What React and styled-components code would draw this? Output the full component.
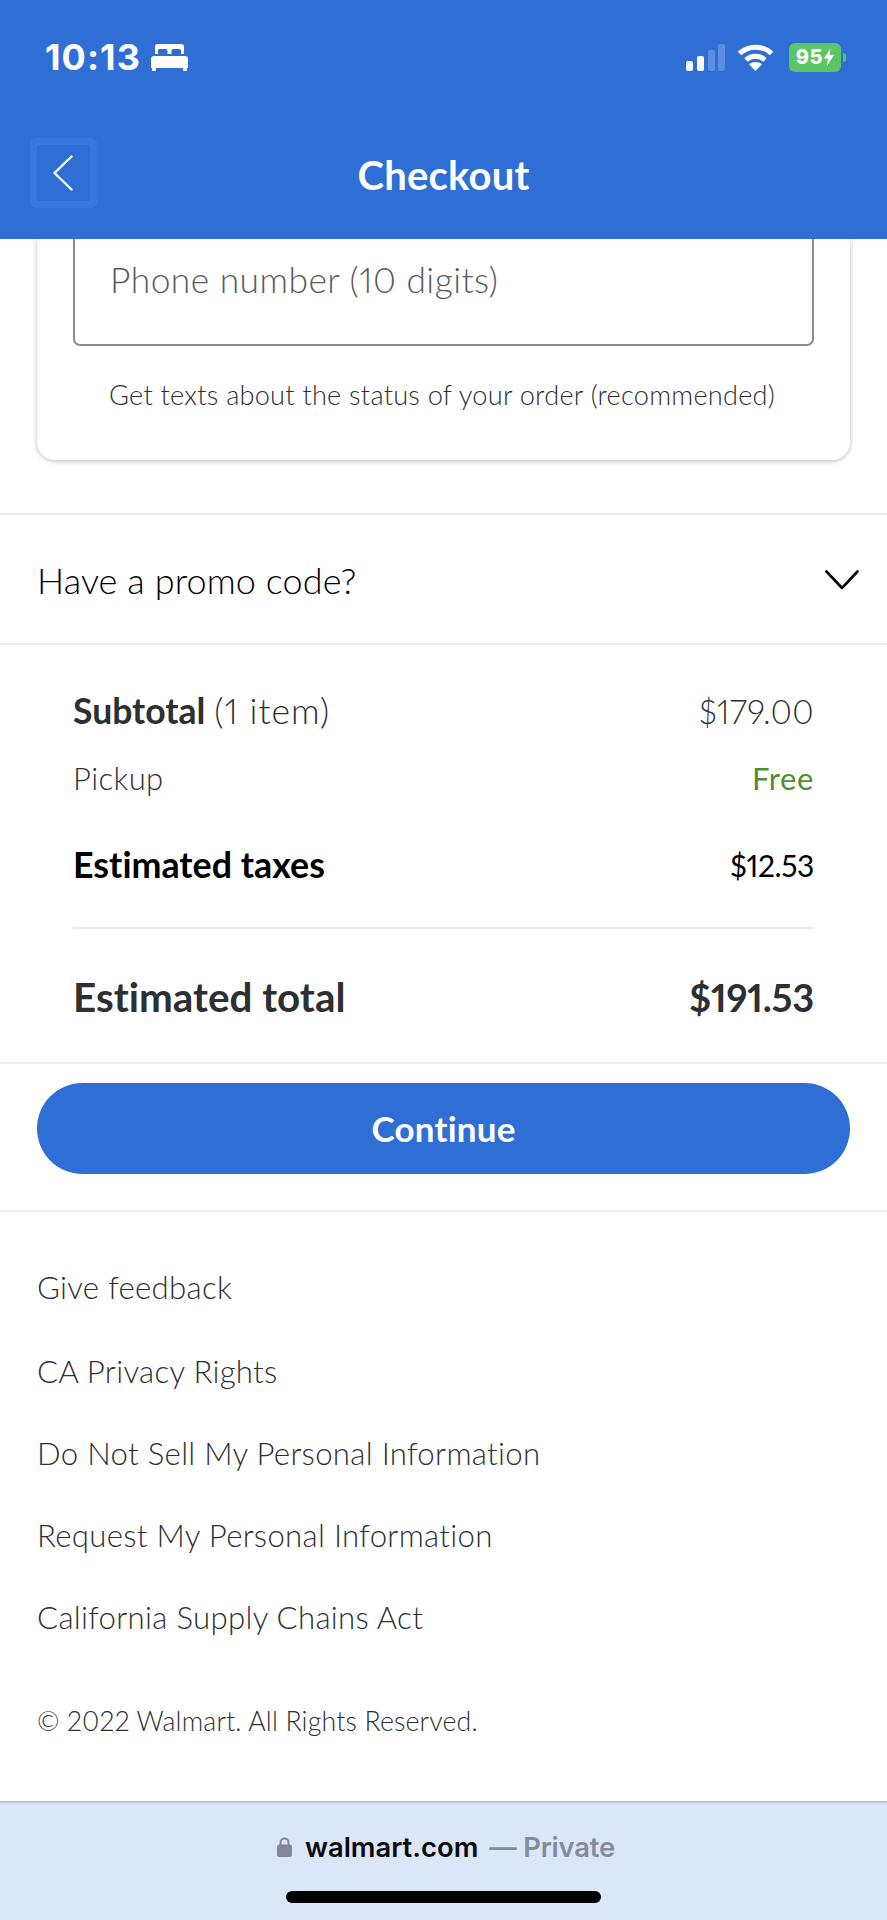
import React from "react";
import styled, { createGlobalStyle } from "styled-components";

const Global = createGlobalStyle`
  html, body { margin: 0; padding: 0; background: #fff; }
  * { box-sizing: border-box; }
`;
const BLUE = "#2f6ed4";
const LATO = `Lato, "Noto Sans", sans-serif`;
const SYS = `Inter, "Liberation Sans", sans-serif`;

const Page = styled.div`
  width: 887px; height: 1920px; overflow: hidden; background: #fff;
  display: flex; flex-direction: column; font-family: ${LATO};
  font-variant-ligatures: none; font-variant-numeric: proportional-nums;
`;
const Header = styled.header`
  flex: none; height: 239px; background: ${BLUE}; display: flex; flex-direction: column;
  padding-top: 42px; color: #fff;
`;
const StatusBar = styled.div`
  height: 30px; padding: 0 46px 0 45px; display: flex; align-items: center; justify-content: space-between;
`;
const StatusGroup = styled.div`
  display: flex; align-items: center; gap: ${p => p.$gap}px;
`;
const Time = styled.span`
  font: 700 36px/30px ${SYS}; letter-spacing: 1.1px;
`;
const Battery = styled.div`
  width: 52px; height: 29px; margin-left: 3px; border-radius: 6px; background: #5cc565; color: #fff;
  display: flex; align-items: center; justify-content: center; gap: 1px; position: relative;
  font: 800 20px/1 ${SYS}; letter-spacing: 0.6px;
  &::after {
    content: ""; position: absolute; left: 54px; top: 10px; width: 3px; height: 9px;
    border-radius: 0 3px 3px 0; background: #5cc565;
  }
`;
const Nav = styled.nav`
  margin-top: 66px; height: 70px; padding: 0 30px;
  display: grid; grid-template-columns: 1fr auto 1fr; align-items: center;
`;
const BackButton = styled.button`
  width: 67px; height: 70px; padding: 0 2px 0 0; background: transparent; border: 7px solid #3877de; border-radius: 6px;
  display: flex; align-items: center; justify-content: center;
`;
const Title = styled.h1`
  margin: 4px 0 0; font: 700 40px/1 ${LATO}; color: #fff; letter-spacing: 0.2px;
`;
const CardZone = styled.section`
  flex: none; height: 276px; padding: 0 37px; border-bottom: 2px solid #ececee;
`;
const Card = styled.div`
  height: 221px; background: #fff; border-radius: 0 0 18px 18px; padding: 0 36px;
  box-shadow: 0 1px 5px rgba(0,0,0,.28);
  clip-path: inset(0 -10px -10px -10px);
`;
const PhoneInput = styled.div`
  height: 107px; border: 2px solid #8b8b92; border-top: none; border-radius: 0 0 7px 7px;
  padding: 22px 0 0 35px; font: 300 35.4px/38px ${LATO}; color: #5a5b60;
  font-variant-numeric: proportional-nums; letter-spacing: .45px;
`;
const Hint = styled.p`
  margin: 32px 0 0; padding-left: 36px; font: 300 27.2px/34px ${LATO}; color: #2e2f33; white-space: nowrap;
  font-variant-ligatures: none; letter-spacing: .22px;
`;
const PromoRow = styled.div`
  flex: none; height: 130px; padding: 2px 28px 0 37px; border-bottom: 2px solid #ececee;
  display: flex; align-items: center; justify-content: space-between;
  font: 300 36px/1 ${LATO}; color: #000; letter-spacing: .1px;
`;
const Summary = styled.section`
  flex: none; padding: 46px 73px 0; height: 419px; display: flex; flex-direction: column; border-bottom: 2px solid #ececee;
`;
const SummaryRow = styled.div`
  display: flex; align-items: center; justify-content: space-between;
  height: 40px; margin-top: ${p => p.$mt || 0}px; color: ${p => p.$color || "#2e2f32"};
  font-size: ${p => p.$size}px; line-height: 1;
`;
const Strong = styled.strong`font-weight: 700;`;
const Count = styled.span`font-weight: 300; letter-spacing: 1px; color: #2e2f32;`;
const Price = styled.span`
  font-weight: ${p => p.$weight || 300}; font-size: ${p => p.$size}px; letter-spacing: ${p => p.$track}px;
  color: ${p => p.$color || "inherit"};
`;
const PickupLabel = styled.span`font-weight: 300; letter-spacing: .4px;`;
const Free = styled.span`color: #4f8f32; font-weight: 400; letter-spacing: .6px;`;
const Rule = styled.hr`
  margin: 42px 0 0; border: 0; height: 2px; flex: none; background: #ececee;
`;
const ButtonZone = styled.div`
  flex: none; height: 148px; padding: 19px 37px 0; border-bottom: 2px solid #ececee;
`;
const Continue = styled.button`
  width: 100%; height: 91px; border: 0; border-radius: 46px; background: ${BLUE}; color: #fff;
  font: 700 35px/1 ${LATO}; letter-spacing: .2px;
`;
const Footer = styled.footer`
  flex: 1; padding: 0 37px;
`;
const FooterLinks = styled.ul`
  list-style: none; margin: 55px 0 0; padding: 0; display: flex; flex-direction: column; gap: 42px;
`;
const FooterLink = styled.li`
  font: 300 31.2px/40px ${LATO}; color: #2e2f33; white-space: nowrap;
  font-variant-ligatures: none; letter-spacing: .3px;
  &:first-child { margin-bottom: 2px; }
`;
const Copyright = styled.p`
  margin: 67px 0 0; font: 300 26.7px/34px ${LATO}; color: #2e2f33;
  font-variant-numeric: proportional-nums; font-variant-ligatures: none; letter-spacing: .17px;
`;
const BrowserBar = styled.div`
  flex: none; height: 119px; background: #dbe7f8; border-top: 2px solid #bcc4cf;
  display: flex; flex-direction: column; align-items: center;
`;
const Url = styled.div`
  margin: 26px 0 0 5px; display: flex; align-items: center; height: 36px; font: 600 27.4px/36px ${SYS};
`;
const Domain = styled.span`color: #0a0a0a; margin: 0 11px 0 13px;`;
const Private = styled.span`color: #868b9a; letter-spacing: -.2px;`;
const HomeBar = styled.div`
  margin-top: 26px; width: 315px; height: 12px; border-radius: 6px; background: #000;
`;

const BedIcon = () => (
  <svg width="37" height="27" viewBox="0 0 37 27" fill="#fff">
    <path d="M4 2.500A2.500 2.500 0 0 1 6.500 0h24A2.500 2.500 0 0 1 33 2.500V10H30V6.500a1.500 1.500 0 0 0-1.500-1.500H22a1.500 1.500 0 0 0-1.500 1.500V10h-4V6.500A1.500 1.500 0 0 0 15 5H8.500A1.500 1.500 0 0 0 7 6.500V10H4Z"/>
    <path d="M3 12h31a3 3 0 0 1 3 3v9H0v-9a3 3 0 0 1 3-3Z"/>
    <rect x="1" y="24" width="4" height="3" rx="1"/><rect x="32" y="24" width="4" height="3" rx="1"/>
  </svg>
);
const SignalIcon = () => (
  <svg width="39" height="27" viewBox="0 0 39 27">
    <rect x="0" y="17" width="7" height="10" rx="2" fill="#fff"/>
    <rect x="11" y="12" width="7" height="15" rx="2" fill="#fff"/>
    <rect x="22" y="6" width="7" height="21" rx="2" fill="#5b8ee0"/>
    <rect x="32" y="0" width="7" height="27" rx="2" fill="#5b8ee0"/>
  </svg>
);
const WifiIcon = () => (
  <svg width="37" height="27" viewBox="0 0 37 27" fill="none" stroke="#fff" strokeWidth="5">
    <path d="M2.500 9.500C11.500 1 25.500 1 34.500 9.500"/>
    <path d="M9 16c5.500-5 13.500-5 19 0"/>
    <path d="M18.500 27l-6.500-6.700c3.600-3 9.400-3 13 0Z" fill="#fff" stroke="none"/>
  </svg>
);
const Bolt = () => (
  <svg width="10" height="18" viewBox="0 0 10 18" fill="#fff"><path d="M6.500 0 0 10.500h4L2.800 18 10 7H5.700Z"/></svg>
);
const BackIcon = () => (
  <svg width="20" height="36" viewBox="0 0 20 36" fill="none" stroke="#fff" strokeWidth="2.400" strokeLinecap="round" strokeLinejoin="round">
    <path d="M18.500 1.500 1.500 18l17 16.500"/>
  </svg>
);
const ChevronDown = () => (
  <svg width="34" height="20" viewBox="0 0 34 20" fill="none" stroke="#000" strokeWidth="2.600" strokeLinecap="round" strokeLinejoin="round">
    <path d="M1.500 1.500 17 18 32.500 1.500"/>
  </svg>
);
const LockIcon = () => (
  <svg width="15" height="20" viewBox="0 0 15 20" fill="#82869a">
    <path d="M3.500 8V5.500a4 4 0 0 1 8 0V8" fill="none" stroke="#82869a" strokeWidth="2"/>
    <rect x="0" y="7.500" width="15" height="12.500" rx="2.500"/>
  </svg>
);

const links = ["Give feedback", "CA Privacy Rights", "Do Not Sell My Personal Information", "Request My Personal Information", "California Supply Chains Act"];

export default function App() {
  return (
    <Page>
      <Global />
      <Header>
        <StatusBar>
          <StatusGroup $gap={10}><Time>10:13</Time><BedIcon /></StatusGroup>
          <StatusGroup $gap={12}><SignalIcon /><WifiIcon /><Battery>95<Bolt /></Battery></StatusGroup>
        </StatusBar>
        <Nav>
          <BackButton aria-label="Back"><BackIcon /></BackButton>
          <Title>Checkout</Title>
        </Nav>
      </Header>
      <CardZone>
        <Card>
          <PhoneInput>Phone number (10 digits)</PhoneInput>
          <Hint>Get texts about the status of your order (recommended)</Hint>
        </Card>
      </CardZone>
      <PromoRow>Have a promo code?<ChevronDown /></PromoRow>
      <Summary>
        <SummaryRow $size={35.5}><span><Strong>Subtotal</Strong> <Count>(1 item)</Count></span><Price $size={33} $track={0.300} $color="#2e2f33">$179.00</Price></SummaryRow>
        <SummaryRow $mt={27} $size={31} $color="#2e2f33"><PickupLabel>Pickup</PickupLabel><Free>Free</Free></SummaryRow>
        <SummaryRow $mt={47} $size={35.8} $color="#000"><Strong>Estimated taxes</Strong><Price $size={30} $weight={400} $track={-0.400}>$12.53</Price></SummaryRow>
        <Rule />
        <SummaryRow $mt={48} $size={40.400}><Strong>Estimated total</Strong><Price $size={38} $weight={700} $track={-0.200}>$191.53</Price></SummaryRow>
      </Summary>
      <ButtonZone><Continue>Continue</Continue></ButtonZone>
      <Footer>
        <FooterLinks>{links.map(l => <FooterLink key={l}>{l}</FooterLink>)}</FooterLinks>
        <Copyright>© 2022 Walmart. All Rights Reserved.</Copyright>
      </Footer>
      <BrowserBar>
        <Url><LockIcon /><Domain>walmart.com</Domain><Private>— Private</Private></Url>
        <HomeBar />
      </BrowserBar>
    </Page>
  );
}
